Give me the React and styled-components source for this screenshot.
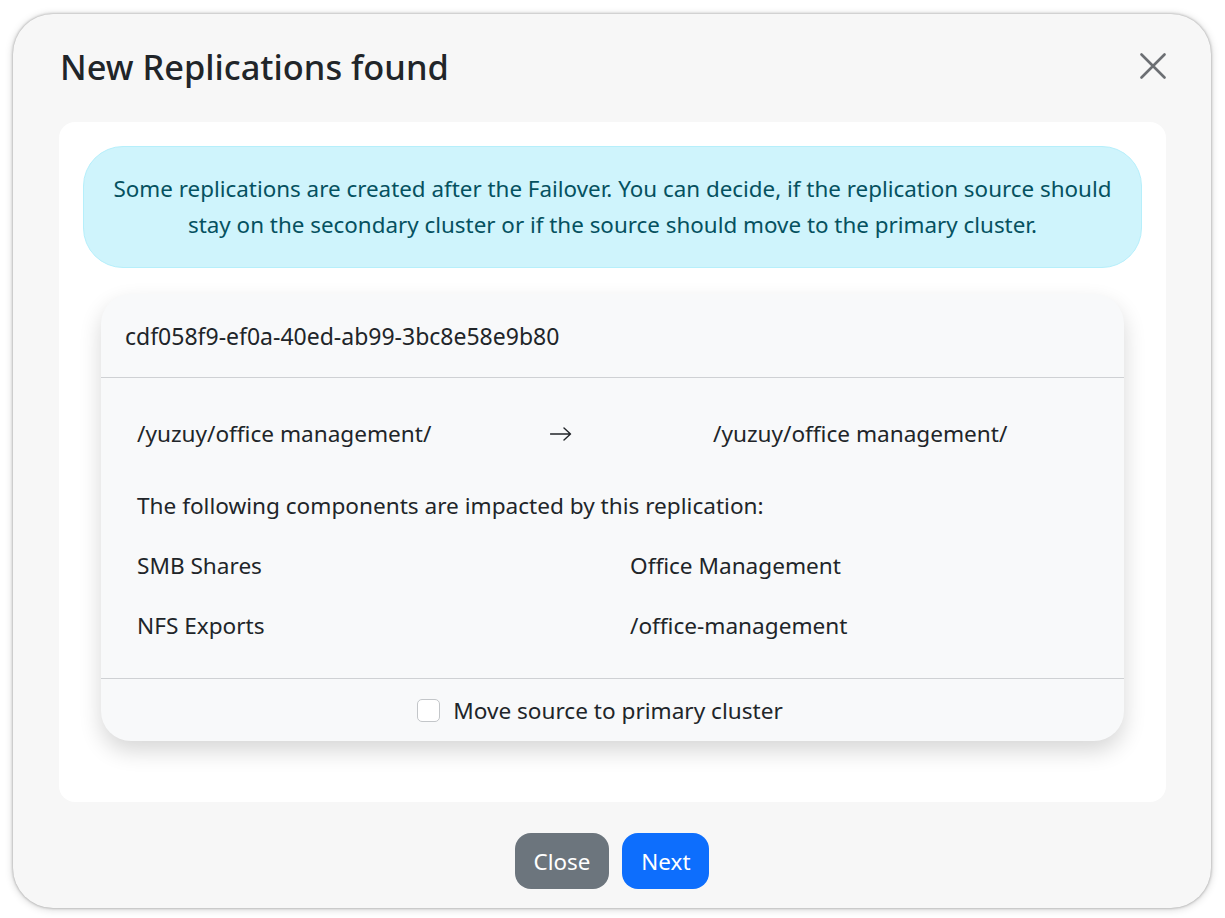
import React from 'react';
import styled, { createGlobalStyle } from 'styled-components';

const Global = createGlobalStyle`
  html, body {
    margin: 0;
    padding: 0;
    background: #ffffff;
  }
  body {
    font-family: "Noto Sans", "Open Sans", sans-serif;
    color: #212529;
  }
`;

const Page = styled.div`
  width: 1225px;
  height: 918px;
  padding: 14px 14px 10px 13px;
  box-sizing: border-box;
`;

const Modal = styled.div`
  width: 1198px;
  height: 894px;
  box-sizing: border-box;
  background: #f7f7f7;
  border-radius: 40px;
  box-shadow: 0 0 3px rgba(0, 0, 0, 0.35), 0 1px 8px rgba(0, 0, 0, 0.18);
  display: flex;
  flex-direction: column;
`;

const Header = styled.div`
  height: 108px;
  display: flex;
  align-items: center;
  justify-content: space-between;
  padding: 0 44px 4px 47px;
  box-sizing: border-box;
`;

const Title = styled.h1`
  margin: 0;
  font-size: 34.4px;
  font-weight: 500;
  color: #212529;
`;

const CloseIcon = styled.button`
  border: 0;
  background: none;
  padding: 0;
  width: 28px;
  height: 28px;
  display: flex;
  align-items: center;
  justify-content: center;
  cursor: pointer;
`;

const Body = styled.div`
  margin: 0 45px 0 46px;
  height: 680px;
  box-sizing: border-box;
  background: #ffffff;
  border-radius: 16px;
  padding: 24px 24px;
  display: flex;
  flex-direction: column;
`;

const Alert = styled.div`
  background: #cff4fc;
  border: 1px solid #b6effb;
  color: #055160;
  border-radius: 40px;
  padding: 24px 10px;
  text-align: center;
  font-size: 22.4px;
  line-height: 36px;
`;

const Card = styled.div`
  margin: 26px 18px 0;
  background: #f8f9fa;
  border-radius: 30px;
  box-shadow: 0 10px 22px rgba(0, 0, 0, 0.16);
  display: flex;
  flex-direction: column;
`;

const CardHeader = styled.div`
  height: 84px;
  box-sizing: border-box;
  display: flex;
  align-items: center;
  padding: 0 24px;
  border-bottom: 1px solid #cfd1d4;
  font-size: 23px;
`;

const CardBody = styled.div`
  padding: 38px 36px 34px;
  display: flex;
  flex-direction: column;
  font-size: 22.6px;
  line-height: 36px;
`;

const PathRow = styled.div`
  display: grid;
  grid-template-columns: 413px 163px 1fr;
  align-items: center;
`;

const Arrow = styled.svg`
  display: block;
`;

const Note = styled.div`
  margin-top: 36px;
`;

const ComponentRow = styled.div`
  display: grid;
  grid-template-columns: 493px 1fr;
  margin-top: 24px;
`;

const CardFooter = styled.label`
  height: 63px;
  box-sizing: border-box;
  border-top: 1px solid #cfd1d4;
  display: flex;
  align-items: center;
  justify-content: center;
  gap: 13px;
  padding-right: 25px;
  font-size: 22.6px;
  cursor: pointer;
`;

const Check = styled.input`
  appearance: none;
  margin: 0;
  width: 23px;
  height: 23px;
  border: 1px solid #c3c6c9;
  border-radius: 5px;
  background: #ffffff;
  &:checked {
    background: #0d6efd;
    border-color: #0d6efd;
  }
`;

const Footer = styled.div`
  flex: 1;
  display: flex;
  justify-content: center;
  align-items: flex-start;
  gap: 13px;
  padding-top: 31px;
`;

const Button = styled.button`
  height: 56px;
  border: 0;
  border-radius: 16px;
  padding: 0 19px;
  font-family: inherit;
  font-size: 22.4px;
  color: #ffffff;
  background: ${(p) => (p.$primary ? '#0d6efd' : '#6c757d')};
  cursor: pointer;
`;

const components = [
  ['SMB Shares', 'Office Management'],
  ['NFS Exports', '/office-management'],
];

export default function App() {
  const [move, setMove] = React.useState(false);
  return (
    <Page>
      <Global />
      <Modal>
        <Header>
          <Title>New Replications found</Title>
          <CloseIcon aria-label="Close">
            <svg width="26" height="26" viewBox="0 0 26 26">
              <path d="M1.5 1.5 L24.5 24.5 M24.5 1.5 L1.5 24.5" stroke="#6c6f73" strokeWidth="2.6" strokeLinecap="round" />
            </svg>
          </CloseIcon>
        </Header>
        <Body>
          <Alert>
            Some replications are created after the Failover. You can decide, if the replication source should
            stay on the secondary cluster or if the source should move to the primary cluster.
          </Alert>
          <Card>
            <CardHeader>cdf058f9-ef0a-40ed-ab99-3bc8e58e9b80</CardHeader>
            <CardBody>
              <PathRow>
                <span>/yuzuy/office management/</span>
                <Arrow width="22" height="14" viewBox="0 0 22 14">
                  <path d="M0.5 7 H20.5 M14 1 L20.5 7 L14 13" fill="none" stroke="#212529" strokeWidth="1.4" strokeLinecap="round" strokeLinejoin="round" />
                </Arrow>
                <span>/yuzuy/office management/</span>
              </PathRow>
              <Note>The following components are impacted by this replication:</Note>
              {components.map(([kind, name]) => (
                <ComponentRow key={kind}>
                  <span>{kind}</span>
                  <span>{name}</span>
                </ComponentRow>
              ))}
            </CardBody>
            <CardFooter>
              <Check type="checkbox" checked={move} onChange={(e) => setMove(e.target.checked)} />
              Move source to primary cluster
            </CardFooter>
          </Card>
        </Body>
        <Footer>
          <Button>Close</Button>
          <Button $primary>Next</Button>
        </Footer>
      </Modal>
    </Page>
  );
}
